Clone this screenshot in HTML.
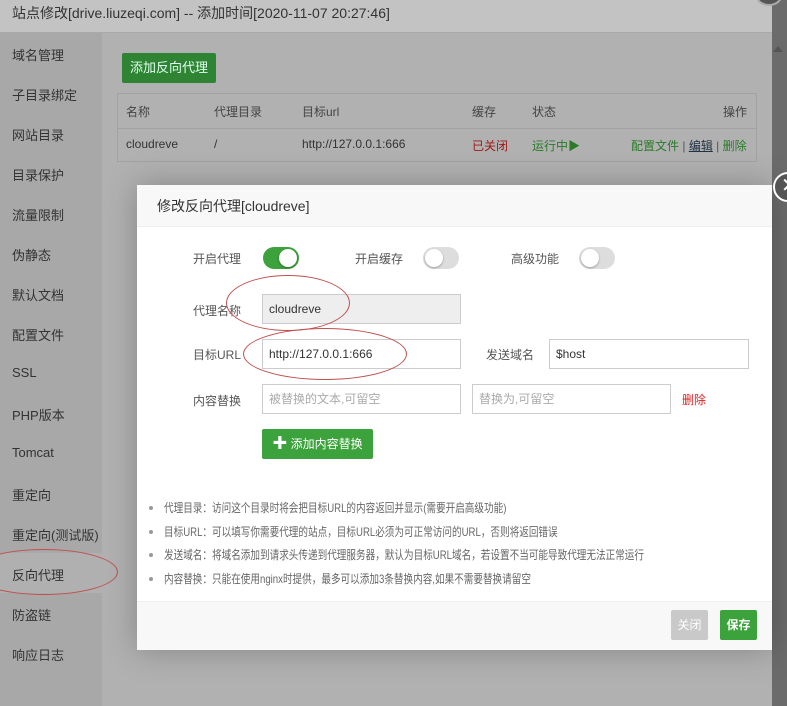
<!DOCTYPE html>
<html><head><meta charset="utf-8"><style>
*{margin:0;padding:0;box-sizing:border-box}
body{width:787px;height:706px;overflow:hidden;background:#6b6b6b;font-family:"Liberation Sans","Noto Sans CJK SC",sans-serif;font-size:12px;color:#333;position:relative}
.abs{position:absolute}
#panel{left:0;top:0;width:772px;height:706px;background:#b1b1b1}
#title{left:0;top:0;width:772px;height:33px;background:#c3c3c3;border-bottom:1px solid #a9a9a9;font-size:14px;color:#333;padding:5px 12px;line-height:16px}
#side{left:0;top:33px;width:102px;height:673px;background:#a8a8a8}
.si{position:absolute;left:12px;font-size:13px;color:#333}
.btn{color:#fff;text-align:center;border-radius:2px}
.modal{left:137px;top:185px;width:635px;height:465px;background:#fff;box-shadow:0 0 30px rgba(0,0,0,.25)}
.mh{left:0;top:0;width:635px;height:42px;background:#f8f8f8;border-bottom:1px solid #eee;font-size:14px;padding:12px 20px;line-height:18px;color:#333}
.lbl{position:absolute;font-size:12px;color:#555}
.inp{position:absolute;height:30px;border:1px solid #ccc;background:#fff;font-size:12px;padding:0 6px;line-height:28px;color:#333}
.sw{position:absolute;width:36px;height:22px;border-radius:11px;background:#ddd}
.sw i{position:absolute;top:2px;width:18px;height:18px;border-radius:50%;background:#fff;box-shadow:0 1px 2px rgba(0,0,0,.3)}
.tip{position:absolute;left:12px;font-size:12px;color:#666;width:700px}
.tip:before{content:"";position:absolute;left:0;top:7px;width:4px;height:4px;border-radius:50%;background:#999}
.tip span{position:absolute;left:15px;top:0;white-space:nowrap;transform:scaleX(0.8);transform-origin:left}
</style></head><body>
<div id="panel" class="abs"></div>
<div id="title" class="abs">站点修改[drive.liuzeqi.com] -- 添加时间[2020-11-07 20:27:46]</div>
<div class="abs" style="left:756px;top:-14px;width:26px;height:20px;border-radius:50%;background:#555;border:2px solid #aaa"></div>
<div id="side" class="abs"></div>
<div class="si" style="top:45px">域名管理</div>
<div class="si" style="top:85px">子目录绑定</div>
<div class="si" style="top:125px">网站目录</div>
<div class="si" style="top:165px">目录保护</div>
<div class="si" style="top:205px">流量限制</div>
<div class="si" style="top:245px">伪静态</div>
<div class="si" style="top:285px">默认文档</div>
<div class="si" style="top:325px">配置文件</div>
<div class="si" style="top:365px">SSL</div>
<div class="si" style="top:405px">PHP版本</div>
<div class="si" style="top:445px">Tomcat</div>
<div class="si" style="top:485px">重定向</div>
<div class="si" style="top:525px">重定向(测试版)</div>
<div class="abs" style="left:0;top:553px;width:102px;height:40px;background:#b0b0b0"></div>
<div class="si" style="top:565px">反向代理</div>
<div class="si" style="top:605px">防盗链</div>
<div class="si" style="top:645px">响应日志</div>
<div class="abs" style="left:-30px;top:549px;width:148px;height:46px;border:1px solid #c0504d;border-radius:50%"></div>

<div class="abs btn" style="left:122px;top:53px;width:94px;height:30px;background:#2e8433;line-height:30px;font-size:13px;color:#dfe;">添加反向代理</div>
<div class="abs" style="left:117px;top:93px;width:640px;height:69px;border:1px solid #a2a2a2">
<div class="abs" style="left:0;top:34px;width:638px;border-top:1px solid #a2a2a2"></div>
</div>
<div class="abs" style="left:126px;top:103px;color:#444">名称</div>
<div class="abs" style="left:214px;top:103px;color:#444">代理目录</div>
<div class="abs" style="left:302px;top:103px;color:#444">目标url</div>
<div class="abs" style="left:472px;top:103px;color:#444">缓存</div>
<div class="abs" style="left:532px;top:103px;color:#444">状态</div>
<div class="abs" style="left:723px;top:103px;color:#444">操作</div>
<div class="abs" style="left:126px;top:137px;color:#333">cloudreve</div>
<div class="abs" style="left:214px;top:137px;color:#333">/</div>
<div class="abs" style="left:302px;top:137px;color:#333">http://127.0.0.1:666</div>
<div class="abs" style="left:472px;top:137px;color:#a01818">已关闭</div>
<div class="abs" style="left:532px;top:137px;color:#2a7a2a">运行中▶</div>
<div class="abs" style="left:631px;top:137px;color:#2a7a2a">配置文件 <span style="color:#555">|</span> <u style="color:#234">编辑</u> <span style="color:#555">|</span> 删除</div>
<div class="abs" style="left:773px;top:46px;width:0;height:0;border-left:5px solid transparent;border-right:5px solid transparent;border-bottom:6px solid #555"></div>

<div class="abs modal">
<div class="abs mh">修改反向代理[cloudreve]</div>
<div class="lbl" style="left:56px;top:65px">开启代理</div>
<div class="sw" style="left:126px;top:62px;background:#3ca23c"><i style="left:16px"></i></div>
<div class="lbl" style="left:218px;top:65px">开启缓存</div>
<div class="sw" style="left:286px;top:62px"><i style="left:2px"></i></div>
<div class="lbl" style="left:374px;top:65px">高级功能</div>
<div class="sw" style="left:442px;top:62px"><i style="left:2px"></i></div>
<div class="lbl" style="left:56px;top:117px">代理名称</div>
<div class="inp" style="left:125px;top:109px;width:199px;background:#eee">cloudreve</div>
<div class="lbl" style="left:56px;top:161px">目标URL</div>
<div class="inp" style="left:125px;top:154px;width:199px">http://127.0.0.1:666</div>
<div class="lbl" style="left:349px;top:161px">发送域名</div>
<div class="inp" style="left:412px;top:154px;width:200px">$host</div>
<div class="lbl" style="left:56px;top:207px">内容替换</div>
<div class="inp" style="left:125px;top:199px;width:199px;color:#aaa">被替换的文本,可留空</div>
<div class="inp" style="left:335px;top:199px;width:199px;color:#aaa">替换为,可留空</div>
<div class="lbl" style="left:545px;top:206px;color:#e02020">删除</div>
<div class="abs btn" style="left:125px;top:244px;width:111px;height:30px;background:#3ca23c;line-height:30px;font-size:12px"><b style="font-size:15px">✚</b> 添加内容替换</div>
<div class="abs" style="left:89px;top:90px;width:124px;height:56px;border:1px solid #c0504d;border-radius:50%"></div>
<div class="abs" style="left:106px;top:143px;width:164px;height:52px;border:1px solid #c0504d;border-radius:50%"></div>
<div class="tip" style="top:314px"><span>代理目录：访问这个目录时将会把目标URL的内容返回并显示(需要开启高级功能)</span></div>
<div class="tip" style="top:338px"><span>目标URL：可以填写你需要代理的站点，目标URL必须为可正常访问的URL，否则将返回错误</span></div>
<div class="tip" style="top:361px"><span>发送域名：将域名添加到请求头传递到代理服务器，默认为目标URL域名，若设置不当可能导致代理无法正常运行</span></div>
<div class="tip" style="top:385px"><span>内容替换：只能在使用nginx时提供，最多可以添加3条替换内容,如果不需要替换请留空</span></div>
<div class="abs" style="left:0;top:416px;width:635px;height:49px;background:#f8f8f8;border-top:1px solid #eee"></div>
<div class="abs btn" style="left:534px;top:425px;width:37px;height:30px;background:#c9c9c9;line-height:30px">关闭</div>
<div class="abs btn" style="left:583px;top:425px;width:37px;height:30px;background:#3ca23c;line-height:30px;font-weight:bold">保存</div>
</div>
<div class="abs" style="left:773px;top:172px;width:30px;height:30px;border-radius:50%;background:#555;border:2px solid #fff;color:#fff;font-size:20px;line-height:24px;padding-left:6px">✕</div>
</body></html>
